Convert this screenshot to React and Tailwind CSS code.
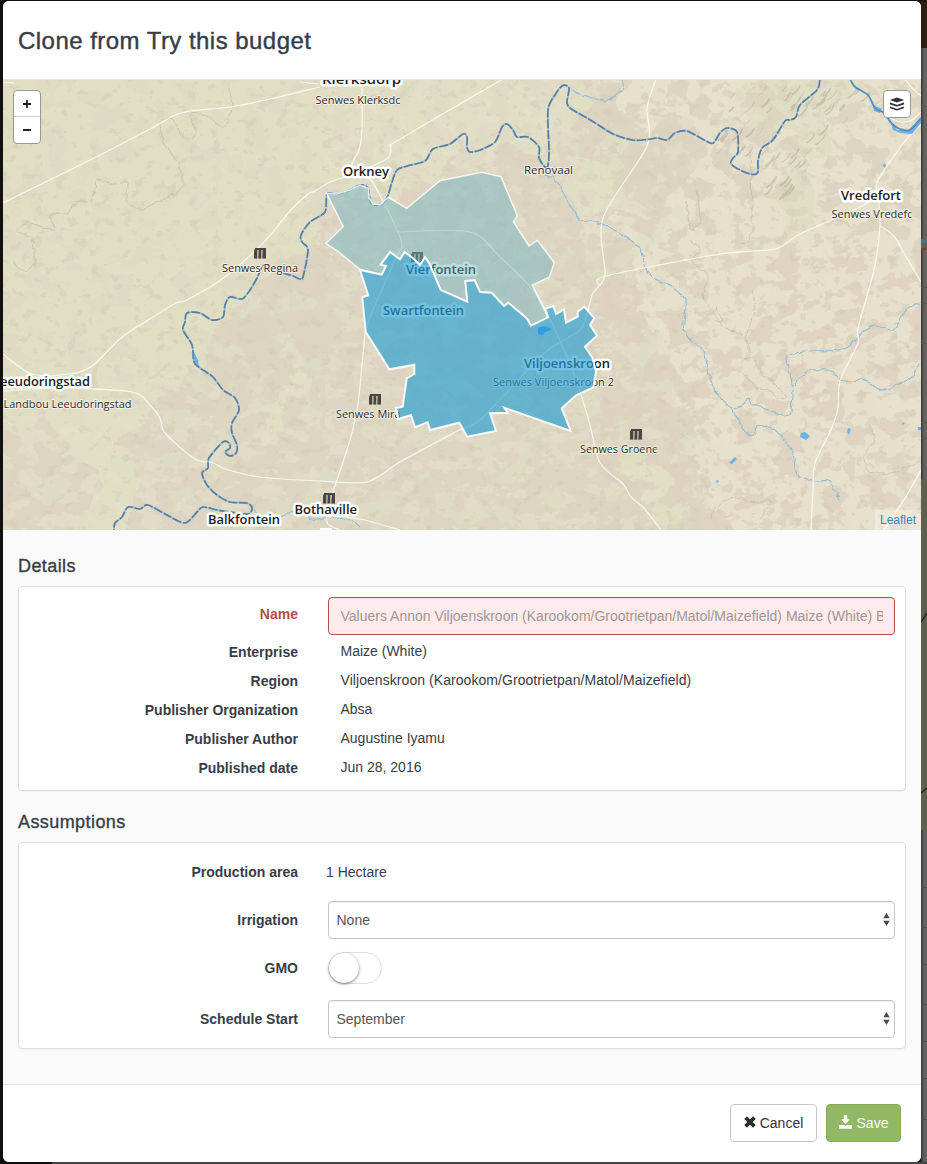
import React from "react";

function smooth(points) {
  const p = points.trim().split(/\s+/).map((s) => s.split(",").map(Number));
  let d = `M${p[0][0]} ${p[0][1]}`;
  for (let i = 0; i < p.length - 1; i++) {
    const a = p[i - 1] || p[i];
    const b = p[i];
    const c = p[i + 1];
    const e = p[i + 2] || c;
    const k = 7;
    d += `C${b[0] + (c[0] - a[0]) / k} ${b[1] + (c[1] - a[1]) / k} ${c[0] - (e[0] - b[0]) / k} ${c[1] - (e[1] - b[1]) / k} ${c[0]} ${c[1]}`;
  }
  return d;
}

const RIVER =
  "820,79 817,90 800,105 796,117 790,120 785,121 773,140 762,148 758,161 758,172 753,174.5 742,171 731,164 733,158 738,152 737,132 727,128 720,133 715,141 710,143 687,131 675,133 667,140 657,138 647,139.5 632,140 613,134 600,126 587,118 570,108 567,102 569,88 562.7,85.5 555,95 548,110 549,150 548,165 545,167 539,158 539,147 528,137 517,137 513,130 507,124 502,127 495,142 480,150 470,152 467,147 467,137 463,134 450,144 433,149 425,161 407,166 397,170 392,182 387,198 380,205 371,203 368,188 360,185 350,190 337,194 327,194 325,212 310,222 301,235 302,242 308,250 303,277 300,279 293,276 280,272 267,265 262,267 257,278 250,290 242,299 230,297 225,305 223,317 212,320 200,313 187,313 185,322 183,330 192,345 194,362 200,368 213,377 223,390 235,398 239,410 232,423 232,433 237,445 236,453 230,456 225,452 230,448 229,443 223,442 209,458 208,468 202,473 207,485 217,495 230,502 247,503 252,508 248,514 230,512 217,510 203,507 197,512 185,523 167,515 148,505 140,509 128,507 122,517 115,523 114,531";

const LIGHT_AREA =
  "326.7,193.3 343.3,226.7 326,243.3 338.3,251.7 360,269.3 381.7,274.7 386,266 380.7,264.7 390,252 400,259.3 404.7,252 412.7,258 420,265 425,257.3 429.3,263.3 440.7,290 467.3,301.7 465.3,281 474.7,280.3 480,292 491.7,292.7 504,306 508.3,302.7 526.7,318.3 531,325.7 548,317.3 532.3,285 549.3,277.3 554.3,262.7 537.3,240.3 529,246 513.3,221.7 517.3,215.7 501,176.7 481.7,172.3 440,180.7 406.7,208.3 388.3,197.3 380,205 373,204 369,198 368.3,188.3 360,185 350,190 336.7,194";

const DARK_AREA =
  "360,270 381.7,274.7 386,266 380.7,264.7 390,252 400,259.3 404.7,252 412.7,258 420,265 425,257.3 429.3,263.3 440.7,290 467.3,301.7 465.3,281 474.7,280.3 480,292 491.7,292.7 504,306 508.3,302.7 526.7,318.3 531,325.7 548,317.3 545.3,308.7 553.3,306 556,314 564,309.3 566,322.7 577.7,316.7 577.7,311.7 584.3,306.7 594.3,318.3 590,324.7 597,335.7 585,346.7 592.7,358.3 596,371.7 593.3,387.3 576,395.3 561.7,408.3 570.7,431 504.3,407.7 507.7,412.7 490,413.3 496,431 467.3,436.7 459.3,422.7 430,430 427.7,422.3 415,427.3 411,415 398.3,419 396,408 402.7,406.7 406.7,378.3 414.3,374 414.3,364.7 389.3,369.3 365.7,331.7 362.3,297.3 368.3,295.3";

const ROADS = [
  "3,203 100,155 150,129 175,115 190,111 230,107 270,99 320,87",
  "362,79 362,130 359,150 352,165 366,174",
  "503,79 470,98 395,142 391,146 388,158 360,172",
  "3,354 32,374 70,374 92,366 122,337 150,319 176,303 187,300 225,277 265,241 290,211 308,194 315,191 330,182 345,177 362,174",
  "3,391 60,388 132,392 150,405 160,418 165,433 195,459 213,463 225,469 260,477 320,481 367,482 400,462 459,430",
  "366,174 376,188 398,232 402,246 396,258 368,322 364,345 358,404 350,440 333,492 327,510 328,524 340,530",
  "327,516 360,519 400,530",
  "656,79 647,108 647,146 603,218 605,275 593,293 587,314 580,330 548,350 520,378 480,420 459,430",
  "396,232 470,232 500,257 533,290 546,311 561,343 578,385 590,425 600,463 623,484 631,497 644,508 661,530",
  "600,286 606,276 720,254 775,249 800,234 860,207 877,195 877,182 902,145 921,124",
  "878,195 880,225 874,270 858,328 858,343 840,381 838,408 831,430 815,463 813,490 811,531",
  "880,226 894,236 905,255 921,282",
  "921,470 905,498 883,531",
  "905,79 914,90 921,96",
  "887,116 900,122 912,120 921,112",
  "3,82 14,83",
  "300,82 318,84",
];

const STREAMS = [
  "622,79 623,88 615,96 604,101 595,98 583,97 573,90",
  "548,165 546,176 554,178 564,193 572,208 580,219 590,219 600,224 616,230 628,238 641,250 646,268 655,279 668,284 677,291 685,298 686,310 683,325 690,340 704,352 711,384 723,400 732,410 740,423 752,436 757,427 764,425 775,430 785,441 793,453 797,474 812,481 828,481 834,490 840,499",
  "732,410 742,406 748,399 755,405 784,415 790,412 793,392 789,370 786,357 792,354 811,351 838,350 853,342 864,330 875,325 893,330 901,318 910,307 921,304",
  "791,387 804,375 815,370 831,371 840,380 853,381 864,379 881,390 898,384 911,377 921,364",
  "253,509 266,518 283,516 300,508 312,519 330,517 350,519 360,527",
];

const THIN = [
  "228,85 232,105 229,120 222,127 205,115 190,115 195,130 193,138 183,136 172,120 160,122 165,145 178,163 184,185 175,193 155,203 140,209 126,200 129,182 115,184 96,181 92,200 75,203 70,212 50,215 55,230 40,226 27,223 17,232 32,238 33,265 20,270 14,261",
  "690,240 700,250 692,262 708,275 704,296 715,315 728,330 742,334 751,352 745,340 755,310 752,290",
  "741,362 752,358 763,375 775,384 786,397 778,398 768,390 758,388 742,372",
  "870,425 875,440 864,455 868,470 885,474 905,468 921,462",
  "712,520 715,508 735,497 752,503 770,500 760,520",
  "715,305 722,320 714,322",
  "687,200 690,230 700,222 697,190",
  "750,150 752,230 742,245",
];

const PONDS = [
  "801,433 805,432 810,436 806,440 800,437",
  "729,463 735,457 737,459 732,464",
  "848,428 851,429 849,435 847,432",
  "716,480 719,481 717,483",
  "902,422 905,423 903,425",
  "918,427 922,427 922,430 918,430",
  "884,163 886,165 885,168 883,166",
  "538,328 544,326 552,329 545,332 543,335 538,334",
  "194,352 198,360 199,367 193,361",
  "873,105 882,109 880,113 874,111",
  "890,120 897,130 908,130 921,118 921,123 912,134 900,133 893,130",
];

function Silo({ x, y }) {
  return (
    <g transform={`translate(${x} ${y})`} fill="#4a4644">
      <path d="M0 1.5h12v9h-12z" opacity=".35" />
      <path d="M1 0h11v2H1zM1 1h2v9.5H0V3zM5 2h2v8.5H4.500zM9 2h2v8.500H8.500zM11 0h1v10.500h-1z" />
    </g>
  );
}

function Label({ x, y, w, bold, clip, children }) {
  return (
    <text
      x={x}
      y={y}
      textLength={w}
      lengthAdjust="spacingAndGlyphs"
      fontSize={bold ? 13 : 11.5}
      fontWeight={bold ? 600 : 400}
      fontFamily='"Open Sans", "Noto Sans", sans-serif'
      fill={bold ? "#1c1c1c" : "#2b2b2b"}
      stroke={bold ? "#fff" : "#f4f0e4"}
      strokeWidth={bold ? 5 : 2}
      strokeLinejoin="round"
      paintOrder="stroke"
      clipPath={clip}
    >
      {children}
    </text>
  );
}

function noise(id, freq, seed, r, g, b, gain, cut) {
  return (
    <filter id={id} x="0" y="0" width="100%" height="100%" colorInterpolationFilters="sRGB">
      <feTurbulence type="fractalNoise" baseFrequency={freq} numOctaves="4" seed={seed} />
      <feColorMatrix values={`0 0 0 0 ${r} 0 0 0 0 ${g} 0 0 0 0 ${b} ${gain} 0 0 0 ${-cut * gain}`} />
      <feComposite in2="SourceGraphic" operator="in" />
    </filter>
  );
}

// Hill shading strokes, scattered along the mountain belt from top right to lower left.
function rand(n) {
  const v = Math.sin(n * 127.1 + 11.7) * 43758.5453;
  return v - Math.floor(v);
}
const RIDGES = [];
for (let i = 0; i < 120; i++) {
  const x = 722 + rand(i) * 150;
  const y = 84 + rand(i + 500) * 120;
  const inBelt = x + y * 0.8 < 945 && x + y > 815 && !(y > 150 && x < 770);
  if (inBelt) RIDGES.push([x, y, 3 + rand(i + 900) * 8, 0.5 + rand(i + 300) * 1.6]);
}

function MapView() {
  return (
    <svg className="block h-[450px] w-[918px]" viewBox="3 80 918 450">
      <defs>
        {noise("patchBeige", "0.045 0.055", 4, 0.862, 0.822, 0.748, 22, 0.53)}
        {noise("patchCream", "0.05 0.07", 11, 0.905, 0.875, 0.795, 22, 0.56)}
        {noise("patchGreen", "0.03 0.038", 21, 0.872, 0.87, 0.76, 22, 0.57)}
        {noise("speck", "0.09 0.11", 7, 0.845, 0.81, 0.73, 20, 0.62)}
        <filter id="ragged" x="-5%" y="-5%" width="110%" height="110%">
          <feTurbulence type="fractalNoise" baseFrequency="0.03" numOctaves="4" seed="3" result="n" />
          <feDisplacementMap in="SourceGraphic" in2="n" scale="60" xChannelSelector="R" yChannelSelector="G" />
        </filter>
        <filter id="meander" x="-5%" y="-5%" width="110%" height="110%">
          <feTurbulence type="fractalNoise" baseFrequency="0.12" numOctaves="2" seed="9" result="n" />
          <feDisplacementMap in="SourceGraphic" in2="n" scale="6" xChannelSelector="R" yChannelSelector="G" />
        </filter>
        <clipPath id="clipKlerksdorp"><rect x="310" y="90" width="90" height="18" /></clipPath>
        <clipPath id="clipVredefort"><rect x="820" y="204" width="91.500" height="18" /></clipPath>
        <clipPath id="clipMira"><rect x="330" y="404" width="70.500" height="18" /></clipPath>
        <clipPath id="clipGroene"><rect x="570" y="438" width="86.500" height="20" /></clipPath>
      </defs>

      <rect x="3" y="80" width="918" height="450" fill="#ddd4c1" />
      <g filter="url(#ragged)">
        <path d="M-30 40H600L590 110 555 150 500 150 450 175 400 195 330 200 310 245 270 280 215 325 205 370 130 400 135 480 125 560H100L90 470 40 420-30 410Z" fill="#e0dfc4" />
        <path d="M600 40H960V560H740L700 470 690 400 640 290 620 220 690 190 700 130 620 110Z" fill="#e7e0cc" />
        <path d="M735 40H900L830 120 810 170 815 215 790 250 775 180 790 130 735 130Z" fill="#dfdec3" />
        <path d="M580 130L620 190 600 240 570 220Z" fill="#e0dfc4" />
        <path d="M290 330L310 370 280 440 260 435 290 380ZM620 455L660 470 690 530 650 520Z" fill="#e0dfc4" />
      </g>
      <rect x="325" y="80" width="596" height="450" fill="#000" filter="url(#patchCream)" opacity=".6" />
      <path d="M3 400H130L200 370 225 300 310 260 330 190 600 130H700V530H3Z" filter="url(#patchGreen)" opacity=".7" />
      <rect x="600" y="80" width="321" height="450" filter="url(#patchBeige)" opacity=".8" />
      <rect x="3" y="80" width="590" height="330" filter="url(#patchBeige)" opacity=".3" />
      <rect x="3" y="80" width="918" height="450" filter="url(#speck)" opacity=".6" />
      <path d="M3 385H320V530H3Z" filter="url(#patchCream)" opacity=".6" />

      <g fill="none" stroke="#a9a993" strokeLinecap="round" opacity=".5">
        {RIDGES.map(([x, y, l, w], i) => (
          <path key={i} d={`M${x} ${y}q${-l * 0.2} ${l * 0.6} ${-l * 0.9} ${l}`} strokeWidth={w} />
        ))}
      </g>
      <g fill="none" stroke="#aaa593" strokeWidth=".7" opacity=".6" filter="url(#meander)">
        {THIN.map((p, i) => <path key={i} d={smooth(p)} />)}
      </g>
      <g fill="none" stroke="#8fbdd8" strokeWidth="1.100" filter="url(#meander)">
        {STREAMS.map((p, i) => <path key={i} d={smooth(p)} />)}
      </g>
      <g fill="none" stroke="#fff" strokeWidth="1.200" opacity=".8">
        {ROADS.map((p, i) => <path key={i} d={smooth(p)} />)}
      </g>
      <g fill="#6eb0e8">
        {PONDS.map((p, i) => <polygon key={i} points={p} />)}
      </g>
      <g fill="none" strokeLinejoin="round">
        <path d={smooth(RIVER)} stroke="#93c0e4" strokeWidth="1.700" />
        <path d={smooth(RIVER)} stroke="#587f9f" strokeWidth="1.700" strokeDasharray="9 1.800" />
        <path d={smooth("850,79 855,87 868,95 875,108 884,113 892,124 900,129 910,130 921,118")} stroke="#4f90c2" strokeWidth="1.800" />
      </g>

      <Silo x={254} y={248} />
      <Silo x={369} y={394} />
      <Silo x={630} y={429} />
      <Silo x={323} y={493} />
      <Silo x={411} y={252} />

      <Label x={322} y={84} w={79} bold>Klerksdorp</Label>
      <Label x={315.500} y={104} w={85} clip="url(#clipKlerksdorp)">Senwes Klerksdc</Label>
      <Label x={343} y={175.500} w={46} bold>Orkney</Label>
      <Label x={524} y={173.500} w={49}>Renovaal</Label>
      <Label x={841} y={200} w={60} bold>Vredefort</Label>
      <Label x={831.500} y={218} w={81} clip="url(#clipVredefort)">Senwes Vredefc</Label>
      <Label x={222} y={271.500} w={76}>Senwes Regina</Label>
      <Label x={406} y={274} w={70} bold>Vierfontein</Label>
      <Label x={383} y={315} w={81} bold>Swartfontein</Label>
      <Label x={524} y={367.500} w={86} bold>Viljoenskroon</Label>
      <Label x={493} y={385.500} w={121}>Senwes Viljoenskroon 2</Label>
      <Label x={-7} y={386} w={97} bold>Leeudoringstad</Label>
      <Label x={3.500} y={407.500} w={128}>Landbou Leeudoringstad</Label>
      <Label x={336} y={418} w={64.500} clip="url(#clipMira)">Senwes Mira</Label>
      <Label x={580} y={452.500} w={78} clip="url(#clipGroene)">Senwes Groene</Label>
      <Label x={294.500} y={514} w={62.500} bold>Bothaville</Label>
      <Label x={208} y={524} w={72} bold>Balkfontein</Label>
      <rect x="320" y="528" width="12" height="2" fill="#fff" />

      <polygon points={LIGHT_AREA} fill="#6cb2c2" fillOpacity=".46" stroke="#fff" strokeOpacity=".8" strokeWidth="1.500" />
      <polygon points={DARK_AREA} fill="#26a0d4" fillOpacity=".65" stroke="#fff" strokeOpacity=".9" strokeWidth="2" />
      <polygon points={PONDS[7]} fill="#2c9fe0" />
    </svg>
  );
}

function Heading({ children }) {
  return (
    <h4 className="text-[18px] leading-[20px] tracking-[0.42px] [-webkit-text-stroke:0.35px_#373d48]">{children}</h4>
  );
}

function Row({ label, className, error, shift, children }) {
  return (
    <div className={`flex items-center ${className}`}>
      <div className={`mr-[30px] w-[279px] shrink-0 text-right font-bold ${error ? "-mt-1 text-[#b84c4a]" : shift ? "mt-px" : "-mt-px"}`}>
        <span>{label}</span>
      </div>
      {children}
    </div>
  );
}

function Value({ children }) {
  return <div className="-mt-px pl-[12.5px]">{children}</div>;
}

function SelectBox({ children }) {
  return (
    <div className="flex h-[38px] w-[567px] items-center justify-between rounded-[4px] border border-[#c6c6c9] bg-white pr-[4px] pl-[7.5px] text-[#555] shadow-[inset_0_1px_1px_rgba(0,0,0,0.075)]">
      <span>{children}</span>
      <svg className="h-[13px] w-[7px] -translate-y-px" viewBox="0 0 7 13" fill="#4a4a4a">
        <path d="M3.500 0L6.700 5.200H.3zM3.500 13L6.700 7.800H.3z" />
      </svg>
    </div>
  );
}

function Strip() {
  return (
    <div className="flex w-[6px] flex-col bg-[#646464] shadow-[inset_3px_0_3px_-2px_rgba(0,0,0,0.6)]">
      <div className="h-[47px] bg-[#2c1d0c]" />
      <div className="h-[59px] border-b border-[#565656]" />
      <div className="h-[132px]" />
      <div className="h-[4px] bg-[#4a7078]" />
      <div className="h-[5px] bg-[#5d6357]" />
      <div className="h-[2px] bg-[#8c3434]" />
      <div className="h-[38px] border-b border-[#565656]" />
      <div className="h-[16px] border-b border-[#565656]" />
      <div className="h-[40px] border-b border-[#565656]" />
      <div className="h-[79px] border-b border-[#565656]" />
      <div className="h-[16px] border-b border-[#565656]" />
      <div className="h-[40px]" />
      <svg className="h-[351px] w-[6px] bg-[#5d604d]" viewBox="0 0 6 351">
        <path d="M0 143L6 134M0 314L6 309" stroke="#222" strokeWidth="1.500" />
      </svg>
      <div className="h-[58px] border-b border-[#505050]" />
      <div className="h-[40px] border-b border-[#505050]" />
      <div className="h-[37px] border-b border-[#505050]" />
      <div className="h-[40px] border-b border-[#505050]" />
      <div className="h-[37px] border-b border-[#505050]" />
      <div className="h-[37px] border-b border-[#505050]" />
      <div className="h-[41px] border-b border-[#505050]" />
    </div>
  );
}

export default function App() {
  return (
    <div className='flex h-[1164px] w-[927px] flex-col overflow-hidden bg-[#111112] pt-px font-["Liberation_Sans",Arial,sans-serif] text-[14px] leading-[20px] text-[#373d48]'>
      <div className="flex h-[1161px]">
        <div className="w-[3px] shrink-0" />
        <div className="flex w-[918px] shrink-0 flex-col overflow-hidden rounded-[6px] bg-[#fafafa]">
          <div className="flex h-[79px] shrink-0 items-center border-b border-[#e5e5e5] bg-white pt-[2px] pl-[15px]">
            <h3 className="text-[24px] leading-[26px] tracking-[0.46px] [-webkit-text-stroke:0.4px_#373d48]">Clone from Try this budget</h3>
          </div>

          <div className="relative h-[450px] shrink-0">
            <MapView />
            <div className="absolute top-[10px] left-[10px] flex h-[54px] w-[28px] flex-col rounded-[4px] border border-[#999] bg-white text-[#222]">
              <div className="flex h-[26px] items-center justify-center border-b border-[#ccc]">
                <svg className="size-[8px]" viewBox="0 0 8 8"><path d="M4 0v8M0 4h8" stroke="#222" strokeWidth="1.800" /></svg>
              </div>
              <div className="flex h-[26px] items-center justify-center">
                <svg className="size-[8px]" viewBox="0 0 8 8"><path d="M0 4h8" stroke="#222" strokeWidth="1.800" /></svg>
              </div>
            </div>
            <div className="absolute top-[10px] right-[10px] flex size-[28px] items-center justify-center rounded-[4px] border border-[#999] bg-white">
              <svg className="h-[14px] w-[16px]" viewBox="0 0 16 14">
                <path d="M8 .5L15.200 3 8 5.500 .8 3z" fill="#333" />
                <path d="M1 6.400Q3 7.200 8 8.800 13 7.200 15 6.400M1 10.300Q3 11.100 8 12.700 13 11.100 15 10.300" fill="none" stroke="#333" strokeWidth="1.700" />
              </svg>
            </div>
            <div className="absolute right-0 bottom-0 bg-white/30 px-[5px] text-[12px] leading-[20px] text-[#3b83b5]">Leaflet</div>
          </div>

          <div className="flex h-[554px] shrink-0 flex-col px-[15px] pt-[26px]">
            <Heading>Details</Heading>
            <div className="mt-[10px] h-[205px] w-[888px] rounded-[4px] border border-[#dddddf] bg-white pt-[10px] shadow-[0_1px_1px_rgba(0,0,0,0.04)]">
              <Row label="Name" className="mb-[2px] h-[38px]" error>
                <div className="flex h-[38px] w-[567px] items-center rounded-[4px] border border-[#b2504e] bg-[#ffebeb] px-[11.5px] text-[#a09696] shadow-[inset_0_1px_1px_rgba(0,0,0,0.05)]">
                  <span className="w-[542px] overflow-hidden whitespace-nowrap">
                    Valuers Annon Viljoenskroon (Karookom/Grootrietpan/Matol/Maizefield) Maize (White) Budget
                  </span>
                </div>
              </Row>
              <Row label="Enterprise" className="h-[29px]" shift><Value>Maize (White)</Value></Row>
              <Row label="Region" className="h-[29px]" shift><Value><span className="tracking-[0.06px]">Viljoenskroon (Karookom/Grootrietpan/Matol/Maizefield)</span></Value></Row>
              <Row label="Publisher Organization" className="h-[29px]" shift><Value>Absa</Value></Row>
              <Row label="Publisher Author" className="h-[29px]" shift><Value>Augustine Iyamu</Value></Row>
              <Row label="Published date" className="h-[29px]" shift><Value>Jun 28, 2016</Value></Row>
            </div>

            <div className="mt-[21px]"><Heading>Assumptions</Heading></div>
            <div className="mt-[10px] h-[207px] w-[888px] rounded-[4px] border border-[#dddddf] bg-white shadow-[0_1px_1px_rgba(0,0,0,0.04)]">
              <Row label="Production area" className="h-[58px]"><div className="-ml-[2px]">1 Hectare</div></Row>
              <Row label="Irrigation" className="h-[38px]"><SelectBox>None</SelectBox></Row>
              <Row label="GMO" className="mt-[13px] h-[32px]">
                <div className="flex h-[32px] w-[54px] items-center rounded-full border border-[#dfdfdf] bg-white">
                  <div className="size-[30px] rounded-full bg-white shadow-[0_1px_3px_rgba(0,0,0,0.5)]" />
                </div>
              </Row>
              <Row label="Schedule Start" className="mt-[16px] h-[38px]"><SelectBox>September</SelectBox></Row>
            </div>
          </div>

          <div className="flex h-[78px] shrink-0 justify-end gap-[9px] border-t border-[#e5e5e5] bg-white pt-[19px] pr-[20px]">
            <button className="flex h-[38px] w-[87px] items-center justify-center gap-[4px] rounded-[4px] border border-[#c8c8cc] bg-white text-[#333]">
              <svg className="h-[12px] w-[12px] -translate-y-px" viewBox="0 0 12 12">
                <path d="M1.600 1.600l8.800 8.800M10.400 1.600l-8.800 8.800" stroke="#2d2d2d" strokeWidth="3.800" />
              </svg>
              Cancel
            </button>
            <button className="flex h-[38px] w-[75px] items-center justify-center gap-[5px] rounded-[4px] border border-[#83ac57] bg-[#91b965] text-white">
              <svg className="h-[14px] w-[13px] -translate-y-px" viewBox="0 0 13 14" fill="#fff">
                <path d="M4.800 0h3.400v4.200h2.500L6.500 9.200 2.300 4.200h2.500z" />
                <path d="M0 10h5.200l1.300 1L7.800 10H13v3.800H0z" />
              </svg>
              Save
            </button>
          </div>
        </div>
        <Strip />
      </div>
      <div className="flex h-[2px]">
        <div className="w-[52px]" />
        <div className="grow bg-[#454545]" />
      </div>
    </div>
  );
}
